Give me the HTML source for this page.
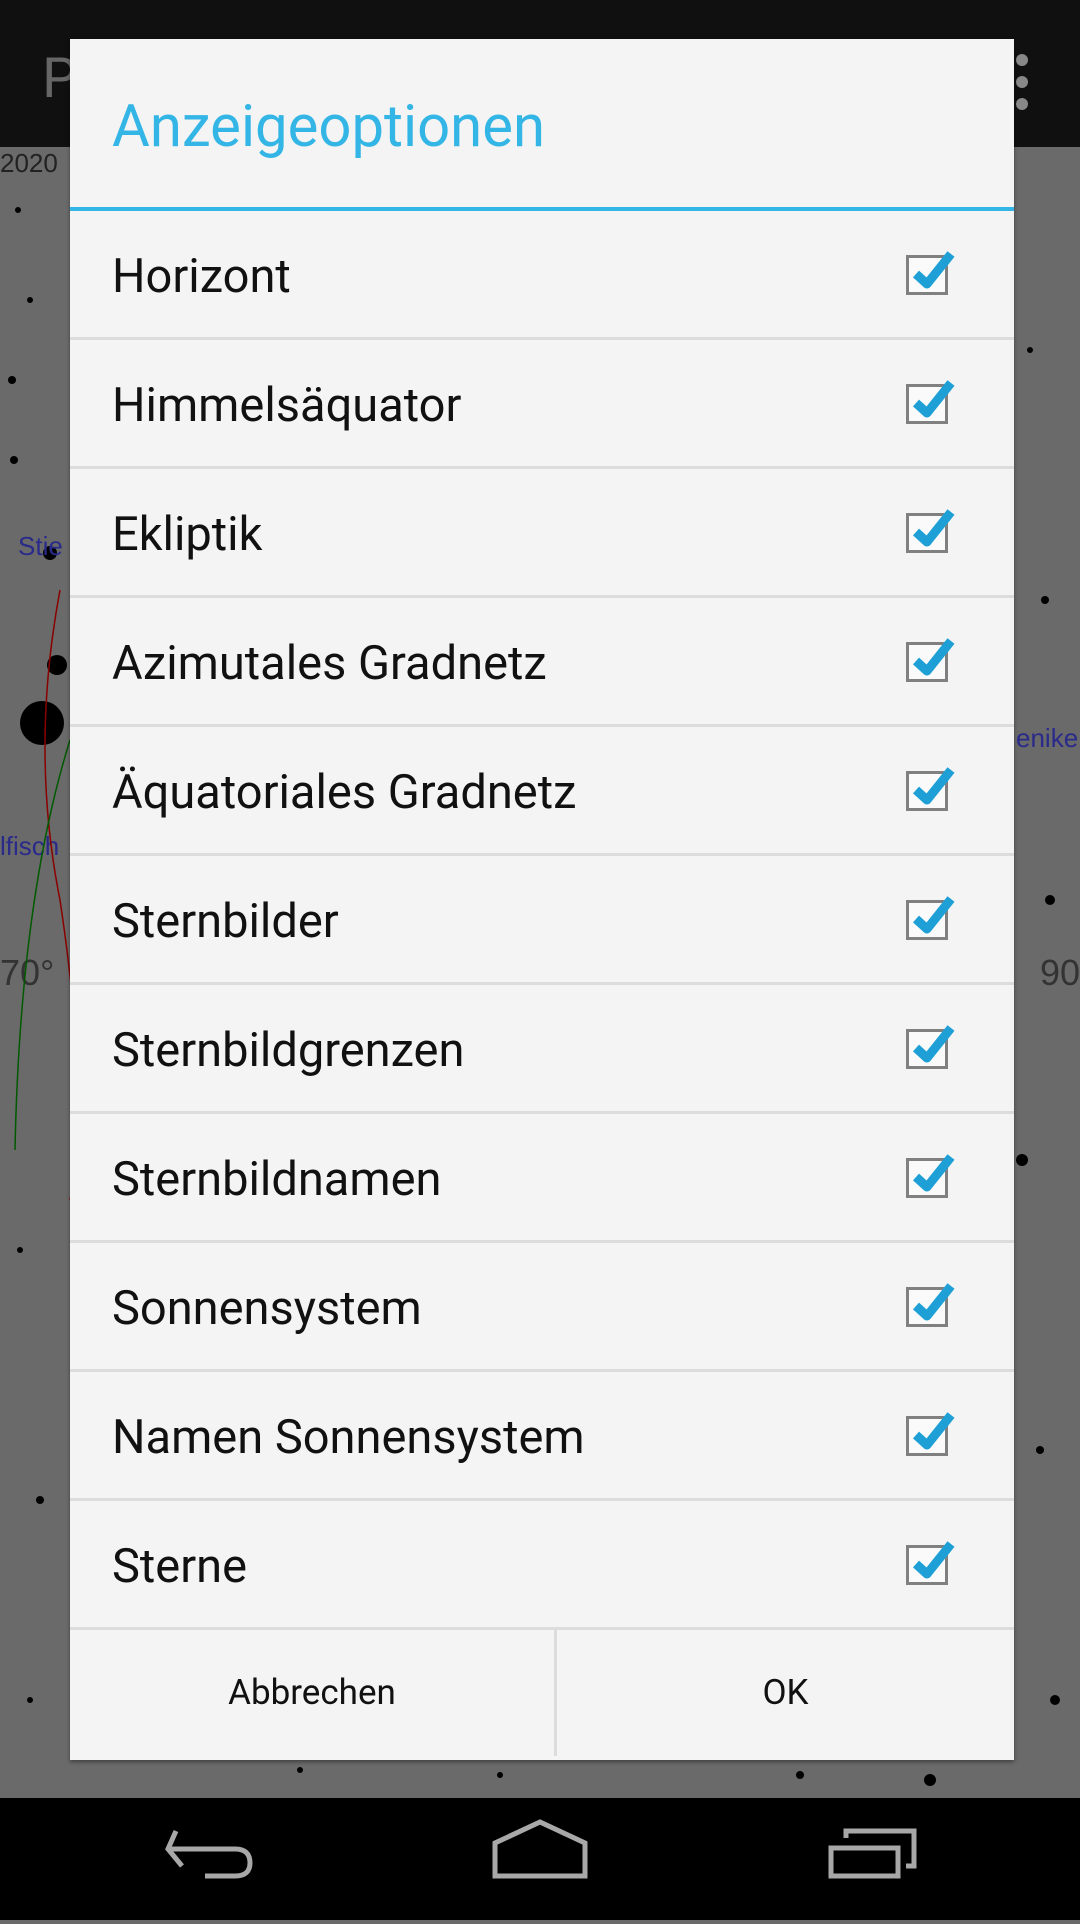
<!DOCTYPE html>
<html><head><meta charset="utf-8"><style>
*{margin:0;padding:0;box-sizing:border-box}
body{width:1080px;height:1920px;position:relative;overflow:hidden;background:#6a6a6a;font-family:"Roboto","Liberation Sans",sans-serif}
#ab{position:absolute;left:0;top:0;width:1080px;height:147px;background:#101010}
#nav{position:absolute;left:0;top:1798px;width:1080px;height:122px;background:#000}
#dlg{position:absolute;left:70px;top:39px;width:944px;height:1721px;background:#f4f4f4;box-shadow:0 2px 4px rgba(0,0,0,.4)}
.title{height:172px;border-bottom:4px solid #33b5e5;color:#33b5e5;font-size:58px;padding-left:42px;line-height:176px}
.row{height:129px;border-bottom:3px solid #dcdcdc;position:relative;font-size:47px;color:#111;padding-left:42px;line-height:132px}
.cb{position:absolute;left:836px;top:44px;width:42px;height:40px;border:3px solid #808080;background:#fafafa}
.cb svg{position:absolute;left:-2px;top:-14px}
.btns{display:flex;height:126px}
.btns div{flex:1;text-align:center;line-height:126px;font-size:35px;color:#111}
.btns div:first-child{border-right:3px solid #dcdcdc;flex:0 0 487px}
</style></head><body>
<svg width="1080" height="1798" style="position:absolute;left:0;top:0">
<g fill="#000">
<circle cx="50" cy="553" r="7"/><circle cx="14" cy="460" r="4"/><circle cx="57" cy="665" r="10"/><circle cx="42" cy="723" r="22"/><circle cx="18" cy="210" r="3"/><circle cx="30" cy="300" r="3"/><circle cx="12" cy="380" r="4"/><circle cx="1045" cy="600" r="4"/><circle cx="1030" cy="350" r="3"/><circle cx="1050" cy="900" r="5"/><circle cx="1022" cy="1160" r="6"/><circle cx="1040" cy="1450" r="4"/><circle cx="1055" cy="1700" r="5"/><circle cx="20" cy="1250" r="3"/><circle cx="40" cy="1500" r="4"/><circle cx="30" cy="1700" r="3"/><circle cx="500" cy="1775" r="3"/><circle cx="300" cy="1770" r="3"/><circle cx="800" cy="1775" r="4"/><circle cx="930" cy="1780" r="6"/>
</g>
<text x="0" y="172" font-size="26" fill="#222" font-family="Liberation Sans">2020</text>
<text x="18" y="555" font-size="26" fill="#2a2a8a" font-family="Liberation Sans">Stie</text>
<text x="0" y="855" font-size="26" fill="#2a2a8a" font-family="Liberation Sans">lfisch</text>
<text x="1016" y="747" font-size="26" fill="#2a2a8a" font-family="Liberation Sans">enike</text>
<text x="0" y="985" font-size="36" fill="#333" font-family="Liberation Sans">70°</text>
<text x="1040" y="985" font-size="36" fill="#333" font-family="Liberation Sans">90</text>
<path d="M60 590 Q30 750 60 900 Q90 1100 70 1200" stroke="#8a0000" fill="none" stroke-width="1.5"/>
<path d="M70 740 Q20 900 15 1150" stroke="#005a00" fill="none" stroke-width="1.5"/>
</svg>
<div id="ab"><div style="position:absolute;left:42px;top:45px;font-size:56px;color:#666">P</div>
<div style="position:absolute;left:1016px;top:54px;width:12px;height:12px;border-radius:6px;background:#888;box-shadow:0 22px 0 #888,0 44px 0 #888"></div></div>
<div id="dlg">
<div class="title">Anzeigeoptionen</div>
<div class="row">Horizont<span class="cb"><svg width="52" height="52" viewBox="0 0 52 52"><path d="M9 30 L20 40 L44 10" stroke="#1ea0d6" stroke-width="9" fill="none" stroke-linejoin="round"/></svg></span></div>
<div class="row">Himmelsäquator<span class="cb"><svg width="52" height="52" viewBox="0 0 52 52"><path d="M9 30 L20 40 L44 10" stroke="#1ea0d6" stroke-width="9" fill="none" stroke-linejoin="round"/></svg></span></div>
<div class="row">Ekliptik<span class="cb"><svg width="52" height="52" viewBox="0 0 52 52"><path d="M9 30 L20 40 L44 10" stroke="#1ea0d6" stroke-width="9" fill="none" stroke-linejoin="round"/></svg></span></div>
<div class="row">Azimutales Gradnetz<span class="cb"><svg width="52" height="52" viewBox="0 0 52 52"><path d="M9 30 L20 40 L44 10" stroke="#1ea0d6" stroke-width="9" fill="none" stroke-linejoin="round"/></svg></span></div>
<div class="row">Äquatoriales Gradnetz<span class="cb"><svg width="52" height="52" viewBox="0 0 52 52"><path d="M9 30 L20 40 L44 10" stroke="#1ea0d6" stroke-width="9" fill="none" stroke-linejoin="round"/></svg></span></div>
<div class="row">Sternbilder<span class="cb"><svg width="52" height="52" viewBox="0 0 52 52"><path d="M9 30 L20 40 L44 10" stroke="#1ea0d6" stroke-width="9" fill="none" stroke-linejoin="round"/></svg></span></div>
<div class="row">Sternbildgrenzen<span class="cb"><svg width="52" height="52" viewBox="0 0 52 52"><path d="M9 30 L20 40 L44 10" stroke="#1ea0d6" stroke-width="9" fill="none" stroke-linejoin="round"/></svg></span></div>
<div class="row">Sternbildnamen<span class="cb"><svg width="52" height="52" viewBox="0 0 52 52"><path d="M9 30 L20 40 L44 10" stroke="#1ea0d6" stroke-width="9" fill="none" stroke-linejoin="round"/></svg></span></div>
<div class="row">Sonnensystem<span class="cb"><svg width="52" height="52" viewBox="0 0 52 52"><path d="M9 30 L20 40 L44 10" stroke="#1ea0d6" stroke-width="9" fill="none" stroke-linejoin="round"/></svg></span></div>
<div class="row">Namen Sonnensystem<span class="cb"><svg width="52" height="52" viewBox="0 0 52 52"><path d="M9 30 L20 40 L44 10" stroke="#1ea0d6" stroke-width="9" fill="none" stroke-linejoin="round"/></svg></span></div>
<div class="row">Sterne<span class="cb"><svg width="52" height="52" viewBox="0 0 52 52"><path d="M9 30 L20 40 L44 10" stroke="#1ea0d6" stroke-width="9" fill="none" stroke-linejoin="round"/></svg></span></div>
<div class="btns"><div>Abbrechen</div><div>OK</div></div>
</div>
<div id="nav"><svg width="1080" height="122" viewBox="0 0 1080 122" fill="none" stroke="#a8a8a8" stroke-width="5">
<path d="M176 33 L168 51 L182 68 M170 51 L235 51 Q250 51 250 65 Q250 78 235 78 L205 78"/>
<path d="M495 78 L495 45 L540 24 L585 45 L585 78 Z"/>
<path d="M831 50 L898 50 L898 78 L831 78 Z M846 40 L846 33 L914 33 L914 68 L906 68"/>
</svg></div>
</body></html>
